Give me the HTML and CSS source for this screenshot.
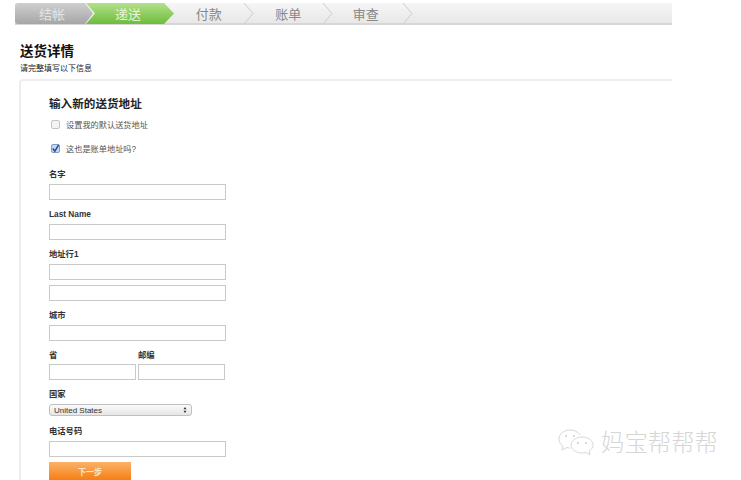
FILE: index.html
```html
<!DOCTYPE html>
<html lang="zh-CN">
<head>
    <meta charset="UTF-8">
    <title>送货详情</title>
    <link rel="stylesheet" href="styles.css">
</head>
<body>
    <div class="page">
        <!-- Checkout steps -->
        <div class="steps">
            <div class="step step-done">结帐</div>
            <div class="step step-active">递送</div>
            <div class="step step-next"><span class="step-text">付款</span><svg class="chevron" viewBox="0 0 10 21"><path d="M0 0L9 10.5L0 21"/></svg></div>
            <div class="step step-next"><span class="step-text">账单</span><svg class="chevron" viewBox="0 0 10 21"><path d="M0 0L9 10.5L0 21"/></svg></div>
            <div class="step step-next"><span class="step-text step-text-last">审查</span><svg class="chevron" viewBox="0 0 10 21"><path d="M0 0L9 10.5L0 21"/></svg></div>
        </div>

        <h1>送货详情</h1>
        <p class="subtitle">请完整填写以下信息</p>

        <div class="panel">
            <h2>输入新的送货地址</h2>

            <label class="check-row">
                <span class="check"></span>
                设置我的默认送货地址
            </label>
            <label class="check-row check-row-last">
                <span class="check check-on"><svg viewBox="0 0 10 10"><path d="M2 5L4.3 8L8.500 1"/></svg></span>
                这也是账单地址吗?
            </label>

            <div class="field">
                <label>名字</label>
                <input type="text">
            </div>
            <div class="field">
                <label>Last Name</label>
                <input type="text">
            </div>
            <div class="field">
                <label>地址行1</label>
                <input type="text">
                <input type="text" class="input-second">
            </div>
            <div class="field">
                <label>城市</label>
                <input type="text">
            </div>
            <div class="field-pair">
                <div class="field">
                    <label>省</label>
                    <input type="text">
                </div>
                <div class="field">
                    <label>邮编</label>
                    <input type="text">
                </div>
            </div>
            <div class="field">
                <label>国家</label>
                <div class="select">
                    <span>United States</span>
                    <svg class="select-arrows" viewBox="0 0 5 8"><path d="M2.500 0L4.500 3H0.500Z M2.500 8L0.500 5H4.500Z"/></svg>
                </div>
            </div>
            <div class="field field-phone">
                <label>电话号码</label>
                <input type="text">
            </div>
            <button class="next-button">下一步</button>
        </div>
    </div>

    <!-- Watermark -->
    <div class="watermark">
        <svg class="watermark-icon" viewBox="0 0 38 28">
            <path d="M22 6C20 2.500 16 1 12 1C6 1 1 5 1 10C1 13 2.500 15.500 5 17L4 21L9 18.500C10 18.800 11 19 12 19"/>
            <path d="M24 8C18 8 13 11.500 13 16C13 20.500 18 24 24 24C25.500 24 26.500 23.800 28 23.300L32 26L31 22C33.500 20.500 35 18.500 35 16C35 11.500 30 8 24 8Z"/>
            <circle class="eye" cx="8" cy="7" r="1"/>
            <circle class="eye" cx="16" cy="7" r="1"/>
            <circle class="eye" cx="20" cy="14" r="1"/>
            <circle class="eye" cx="28" cy="14" r="1"/>
        </svg>
        <span>妈宝帮帮帮</span>
    </div>
</body>
</html>
```

FILE: styles.css
```css
html, body {
    margin: 0;
    padding: 0;
    height: 480px;
    overflow: hidden;
    background: #fff;
}
body {
    font-family: "Liberation Sans", "Noto Sans CJK SC", sans-serif;
    color: #222;
    position: relative;
}
.page {
    width: 672px;
    padding-top: 3px;
}
.steps {
    display: flex;
    height: 20px;
    margin-left: 15px;
    background: linear-gradient(#f6f6f6, #e8e8e8);
    border-bottom: 2px solid #d6d6d6;
    font-size: 13px;
    color: #888;
}
.step {
    display: flex;
    align-items: center;
    justify-content: center;
    height: 21px;
    flex: none;
}
.step-done {
    width: 78px;
    padding-right: 4px;
    box-sizing: border-box;
    color: #e4e4e4;
    background: linear-gradient(#cfcfcf, #a6a6a6);
    border-radius: 3px 0 0 3px;
    clip-path: polygon(0 0, 70px 0, 100% 50%, 70px 100%, 0 100%);
}
.step-active {
    width: 88px;
    margin-left: -7px;
    padding-right: 4px;
    box-sizing: border-box;
    color: #e6f5d8;
    background: linear-gradient(#b4e08c, #6cbd3a);
    clip-path: polygon(0 0, 78px 0, 100% 50%, 78px 100%, 0 100%, 9px 50%);
}
.step-next {
    width: 79.500px;
}
.step-text {
    flex: 1;
    text-align: center;
}
.step-text-last {
    padding-right: 4px;
}
.chevron {
    width: 10px;
    height: 21px;
    flex: none;
    fill: none;
    stroke: #ccc;
}
h1 {
    margin: 17px 0 0 20px;
    font-size: 13.500px;
    line-height: 20px;
    font-weight: bold;
    color: #111;
}
.subtitle {
    margin: 1px 0 0 20px;
    font-size: 8px;
    line-height: 12px;
    color: #222;
}
.panel {
    margin: 4px 0 0 19px;
    padding: 15px 0 0 28px;
    border-top: 2px solid #eee;
    border-left: 2px solid #eee;
    border-top-left-radius: 4px;
}
h2 {
    margin: 0;
    font-size: 11.600px;
    line-height: 16px;
    font-weight: bold;
    color: #222;
}
.check-row {
    display: flex;
    align-items: center;
    gap: 6px;
    margin: 5px 0 0 2px;
    height: 14px;
    font-size: 8.200px;
    color: #555;
}
.check-row-last {
    margin-top: 10px;
    margin-bottom: 5px;
}
.check {
    width: 7px;
    height: 7px;
    border: 1px solid #c4c4c4;
    border-radius: 2px;
    background: #f4f4f4;
    flex: none;
}
.check-on {
    background: #c4d8f0;
    border-color: #7f9cc4;
}
.check svg {
    display: block;
    width: 9px;
    height: 9px;
    margin: -1px;
    fill: none;
    stroke: #234a86;
    stroke-width: 1.600;
}
.field label {
    display: block;
    font-size: 8.300px;
    line-height: 12px;
    font-weight: bold;
    color: #333;
}
.field {
    padding-top: 8px;
}
.field input {
    display: block;
    width: 177px;
    height: 16px;
    margin: 4px 0 0;
    padding: 0;
    box-sizing: border-box;
    border: 1px solid #c9c9c9;
    background: #fff;
}
.field .input-second {
    margin-top: 5px;
}
.field-pair {
    display: flex;
    gap: 2px;
}
.field-pair input {
    width: 87px;
    margin-top: 3px;
}
.select {
    display: flex;
    align-items: center;
    justify-content: space-between;
    width: 143px;
    height: 12px;
    margin-top: 4px;
    padding: 0 4px;
    box-sizing: border-box;
    border: 1px solid #c0c0c0;
    border-radius: 3px;
    background: linear-gradient(#fafafa, #e6e6e6);
    font-size: 8px;
    color: #333;
}
.select-arrows {
    width: 4px;
    height: 6px;
    fill: #333;
}
.field-phone {
    padding-top: 9px;
}
.next-button {
    display: block;
    width: 82px;
    height: 18px;
    margin-top: 5px;
    padding: 0;
    border: 0;
    background: linear-gradient(#fbb268, #f57f14);
    color: #fbe6d0;
    font-family: inherit;
    font-size: 8px;
    font-weight: bold;
}
.watermark {
    position: absolute;
    left: 558px;
    top: 429px;
    display: flex;
    align-items: center;
    gap: 5px;
    font-size: 23.400px;
    font-weight: 300;
    line-height: 28px;
    color: #d6d6d6;
    white-space: nowrap;
}
.watermark-icon {
    width: 38px;
    height: 28px;
    fill: #fff;
    stroke: #d8d8d8;
}
.watermark-icon .eye {
    fill: #ccc;
    stroke: none;
}
```
